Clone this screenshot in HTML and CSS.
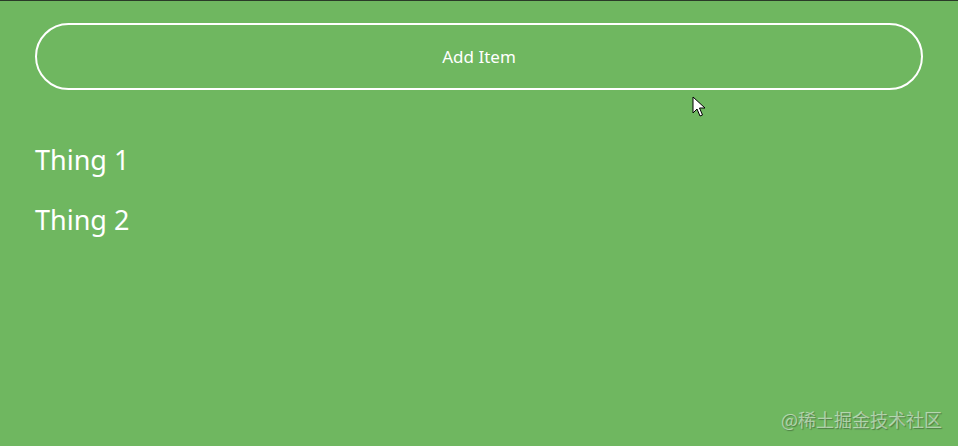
FILE: index.html
```html
<!DOCTYPE html>
<html>
<head>
<meta charset="utf-8">
<link rel="stylesheet" href="styles.css">
</head>
<body>
<div class="page">
  <button class="add-btn">Add Item</button>
  <ul class="list">
    <li class="item">Thing 1</li>
    <li class="item">Thing 2</li>
  </ul>
</div>
<svg class="cursor" width="14" height="22" viewBox="0 0 14 22"><path d="M1 1 L1 17 L5 13 L8 20 L10.5 19 L7.5 12 L13 12 Z" fill="#fff" stroke="#000" stroke-width="1" stroke-linejoin="round"/></svg>
<div class="watermark">@稀土掘金技术社区</div>
</body>
</html>
```
FILE: styles.css
```css
html, body {
  margin: 0;
  height: 100%;
}
body {
  background: #6fb760;
  border-top: 1px solid #2a3a28;
  box-sizing: border-box;
  font-family: "Noto Sans", "Open Sans", sans-serif;
  color: #fff;
  overflow: hidden;
  position: relative;
}
.page {
  padding: 22px 35px 0;
}
.add-btn {
  display: block;
  width: 100%;
  height: 67px;
  background: transparent;
  border: 2px solid #fff;
  border-radius: 34px;
  color: #fff;
  font-family: "Noto Sans", sans-serif;
  font-size: 17px;
  padding: 0;
}
.list {
  list-style: none;
  margin: 0;
  padding: 0;
  padding-top: 52px;
  display: flex;
  flex-direction: column;
  gap: 24px;
}
.item {
  font-size: 27px;
  line-height: 36px;
}
.cursor {
  position: absolute;
  left: 692px;
  top: 95px;
}
.watermark {
  position: absolute;
  right: 16px;
  bottom: 14px;
  font-family: "Noto Sans CJK SC", sans-serif;
  font-size: 18px;
  color: rgba(255,255,255,0.5);
  text-shadow: 1px 1px 1px rgba(0,0,0,0.3);
}
```
